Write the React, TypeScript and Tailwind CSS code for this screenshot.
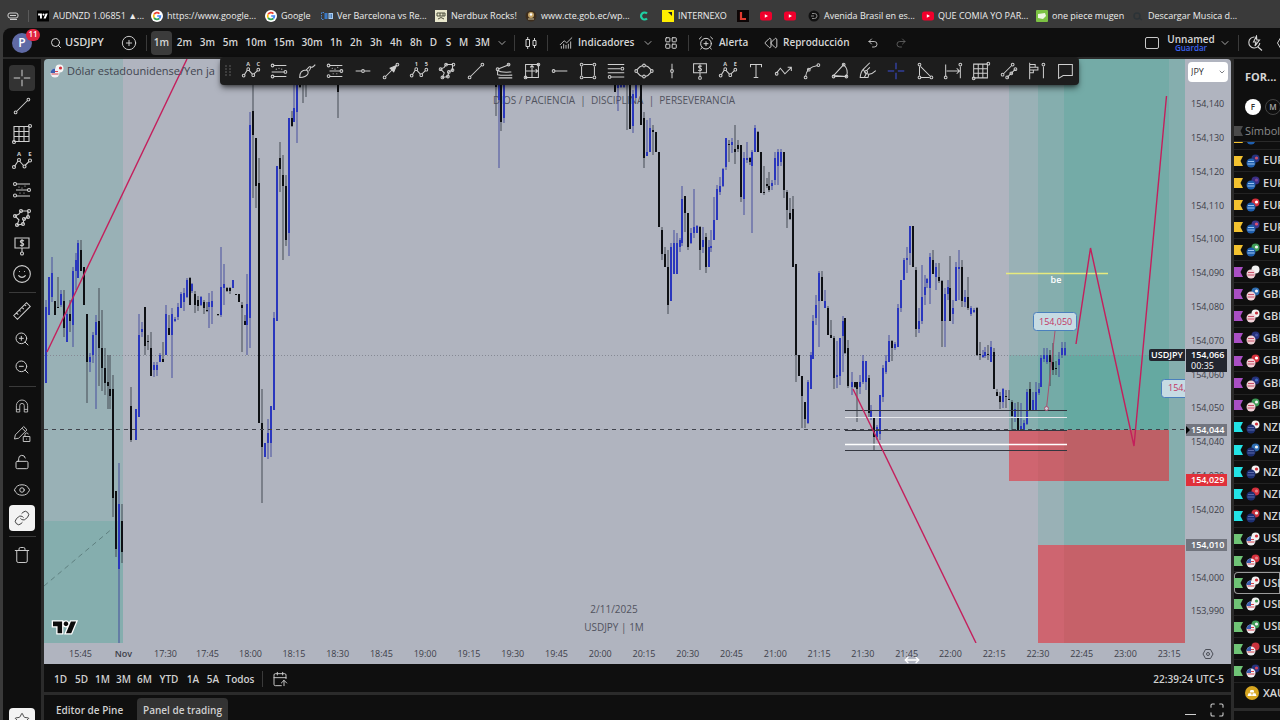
import type { ReactNode } from "react";
import {
  AlarmClockPlus,
  CalendarArrowUp,
  ChartNoAxesCombined,
  ChevronDown,
  CirclePlus,
  Eye,
  LayoutGrid,
  Link,
  LockOpen,
  Maximize,
  MoveHorizontal,
  Redo2,
  Rewind,
  Search,
  Smile,
  Star,
  Trash,
  Undo2,
  ZoomIn,
  ZoomOut,
} from "lucide-react";

// ── Types ──────────────────────────────────────────────────────────────────
type Side = "b" | "k";
// x, high, low, body top, body bottom, side
type Candle = [number, number, number, number, number, Side];

interface ToolIcon {
  d?: string;
  nodes?: [number, number][];
  dots?: [number, number][];
  labels?: [number, number, string][];
  arrow?: string;
}

// ── Candles ────────────────────────────────────────────────────────────────
const CANDLES: Candle[] = [
  [46, 300, 383, 307, 383, "b"], [49, 277, 315, 277, 315, "b"], [52, 257, 302, 273, 297, "b"],
  [55, 301, 315, 301, 315, "k"], [58, 277, 308, 307, 308, "k"], [61, 290, 307, 294, 305, "b"],
  [64, 290, 337, 301, 328, "k"], [67, 310, 342, 314, 342, "b"], [70, 300, 332, 314, 321, "k"],
  [73, 267, 347, 271, 325, "b"], [76, 253, 290, 260, 271, "b"], [78, 240, 278, 243, 278, "b"],
  [81, 240, 271, 250, 271, "k"], [84, 267, 305, 267, 305, "k"], [87, 314, 403, 314, 362, "k"],
  [90, 353, 372, 357, 362, "b"], [93, 332, 363, 335, 355, "b"], [96, 315, 409, 322, 335, "b"],
  [99, 288, 386, 321, 348, "k"], [102, 310, 391, 348, 368, "k"], [105, 348, 395, 368, 383, "k"],
  [108, 355, 409, 382, 386, "k"], [110, 355, 409, 389, 396, "k"], [113, 375, 517, 389, 498, "k"],
  [116, 491, 557, 491, 549, "k"], [119, 463, 643, 504, 569, "b"], [122, 504, 563, 521, 552, "k"],
  [131, 387, 442, 406, 440, "k"], [136, 409, 440, 409, 440, "b"], [139, 314, 417, 335, 417, "b"],
  [142, 322, 337, 329, 332, "b"], [145, 307, 355, 307, 346, "k"], [148, 335, 350, 341, 342, "k"],
  [151, 332, 376, 348, 376, "k"], [154, 362, 377, 365, 370, "b"], [157, 362, 376, 365, 370, "b"],
  [160, 353, 362, 355, 362, "b"], [163, 342, 362, 359, 362, "k"], [166, 305, 355, 314, 355, "b"],
  [169, 315, 335, 328, 335, "k"], [172, 308, 378, 314, 335, "b"], [175, 317, 322, 319, 321, "b"],
  [178, 303, 320, 307, 317, "b"], [181, 292, 308, 294, 308, "b"], [184, 288, 311, 293, 302, "b"],
  [187, 278, 298, 280, 297, "b"], [190, 277, 305, 278, 305, "k"], [192, 283, 293, 284, 291, "b"],
  [195, 291, 313, 294, 305, "k"], [198, 296, 311, 300, 306, "k"], [201, 296, 306, 297, 305, "b"],
  [204, 300, 314, 302, 308, "k"], [207, 302, 312, 310, 311, "k"], [209, 293, 328, 302, 307, "b"],
  [212, 291, 324, 301, 307, "b"], [218, 314, 316, 314, 315, "k"], [221, 247, 317, 287, 315, "b"],
  [224, 264, 305, 284, 288, "b"], [227, 287, 292, 288, 291, "k"], [230, 287, 294, 288, 291, "k"],
  [233, 280, 288, 280, 288, "b"], [236, 294, 295, 294, 295, "k"], [239, 294, 302, 294, 302, "k"],
  [242, 302, 352, 305, 308, "k"], [245, 315, 325, 321, 325, "k"], [247, 274, 355, 304, 325, "b"],
  [250, 112, 348, 125, 318, "b"], [253, 80, 198, 111, 135, "k"], [256, 138, 208, 138, 186, "k"],
  [259, 158, 423, 183, 423, "k"], [262, 389, 503, 423, 447, "k"], [265, 443, 457, 443, 457, "b"],
  [268, 419, 459, 433, 443, "b"], [271, 406, 457, 406, 443, "b"], [274, 312, 410, 318, 410, "b"],
  [277, 166, 321, 166, 321, "b"], [280, 142, 192, 158, 169, "k"], [283, 155, 260, 175, 186, "k"],
  [286, 175, 246, 186, 240, "k"], [289, 118, 256, 118, 233, "b"], [292, 111, 127, 118, 126, "k"],
  [294, 80, 122, 108, 122, "b"], [297, 80, 143, 80, 112, "b"], [300, 80, 88, 80, 87, "k"],
  [303, 80, 103, 80, 84, "k"], [306, 80, 97, 80, 84, "k"], [338, 80, 118, 80, 92, "k"],
  [496, 80, 116, 80, 87, "k"], [499, 80, 168, 80, 100, "b"], [501, 80, 131, 80, 122, "k"],
  [504, 80, 123, 80, 118, "b"], [615, 80, 92, 80, 92, "k"], [618, 80, 111, 80, 88, "b"],
  [621, 80, 88, 80, 87, "b"], [624, 80, 88, 80, 87, "b"], [627, 80, 130, 80, 84, "k"],
  [630, 80, 129, 80, 129, "k"], [633, 90, 133, 94, 126, "b"], [636, 80, 98, 80, 98, "b"],
  [641, 80, 125, 80, 125, "k"], [644, 112, 168, 118, 158, "k"], [647, 120, 156, 152, 156, "b"],
  [650, 118, 152, 128, 152, "b"], [653, 125, 155, 130, 132, "k"], [656, 132, 152, 132, 152, "k"],
  [659, 152, 227, 152, 227, "k"], [662, 227, 260, 230, 254, "k"], [665, 247, 267, 254, 267, "k"],
  [668, 250, 314, 267, 305, "k"], [671, 243, 301, 247, 301, "b"], [674, 230, 274, 243, 274, "b"],
  [677, 233, 274, 243, 274, "b"], [680, 238, 252, 240, 247, "b"], [682, 186, 246, 199, 243, "b"],
  [685, 196, 232, 196, 213, "k"], [688, 213, 250, 213, 247, "k"], [691, 228, 244, 233, 243, "b"],
  [694, 189, 238, 227, 233, "b"], [697, 225, 233, 226, 233, "b"], [700, 226, 270, 227, 250, "k"],
  [703, 227, 253, 240, 247, "b"], [706, 233, 273, 237, 267, "k"], [709, 240, 267, 247, 267, "b"],
  [711, 230, 252, 246, 248, "b"], [714, 197, 240, 220, 240, "b"], [717, 185, 220, 189, 220, "b"],
  [720, 177, 195, 186, 192, "b"], [723, 168, 187, 169, 186, "b"], [726, 138, 170, 138, 167, "b"],
  [729, 140, 162, 144, 145, "k"], [732, 138, 153, 142, 145, "b"], [735, 125, 164, 149, 152, "k"],
  [738, 140, 152, 145, 149, "k"], [741, 145, 202, 145, 197, "k"], [744, 152, 215, 158, 199, "b"],
  [747, 142, 163, 158, 160, "b"], [750, 157, 165, 158, 162, "k"], [752, 150, 233, 152, 166, "b"],
  [755, 125, 152, 128, 152, "b"], [758, 131, 152, 132, 152, "k"], [761, 152, 193, 152, 193, "k"],
  [764, 166, 195, 192, 193, "k"], [767, 178, 188, 184, 186, "k"], [769, 172, 192, 186, 190, "k"],
  [772, 180, 190, 183, 186, "b"], [775, 152, 185, 158, 180, "b"], [778, 149, 185, 152, 166, "b"],
  [781, 149, 166, 152, 162, "b"], [784, 152, 198, 152, 190, "k"], [787, 190, 228, 192, 210, "k"],
  [790, 198, 220, 213, 219, "k"], [793, 196, 267, 209, 267, "k"], [796, 264, 382, 264, 355, "k"],
  [799, 355, 376, 355, 376, "k"], [802, 376, 428, 376, 396, "k"], [805, 402, 428, 402, 419, "k"],
  [808, 380, 424, 382, 423, "b"], [811, 352, 389, 355, 389, "b"], [813, 315, 359, 321, 359, "b"],
  [816, 295, 325, 305, 318, "b"], [819, 271, 347, 273, 301, "b"], [822, 271, 301, 277, 301, "k"],
  [825, 290, 308, 301, 308, "b"], [828, 306, 335, 308, 335, "k"], [831, 320, 338, 335, 338, "k"],
  [834, 336, 389, 338, 378, "k"], [837, 341, 388, 375, 377, "b"], [840, 338, 385, 338, 376, "b"],
  [843, 316, 372, 321, 336, "b"], [845, 318, 354, 318, 353, "k"], [848, 340, 388, 348, 386, "k"],
  [852, 372, 395, 382, 387, "b"], [855, 382, 388, 382, 387, "k"], [857, 382, 422, 382, 389, "k"],
  [860, 375, 394, 382, 387, "b"], [863, 355, 384, 361, 382, "b"], [866, 361, 390, 361, 382, "b"],
  [869, 375, 417, 378, 413, "k"], [871, 405, 420, 410, 417, "b"], [874, 417, 450, 417, 437, "k"],
  [877, 425, 440, 427, 437, "b"], [880, 395, 440, 395, 434, "b"], [883, 365, 402, 368, 397, "b"],
  [886, 355, 374, 361, 372, "b"], [889, 335, 362, 341, 362, "b"], [892, 340, 361, 341, 348, "k"],
  [895, 342, 350, 344, 348, "b"], [898, 304, 347, 308, 347, "b"], [901, 280, 312, 280, 308, "b"],
  [904, 258, 280, 260, 280, "b"], [907, 247, 273, 258, 260, "b"], [910, 226, 265, 226, 253, "b"],
  [913, 226, 267, 226, 267, "k"], [916, 267, 337, 270, 329, "k"], [919, 308, 333, 321, 329, "b"],
  [922, 265, 324, 297, 321, "b"], [925, 275, 305, 287, 295, "b"], [927, 278, 288, 279, 283, "b"],
  [930, 253, 304, 257, 288, "b"], [933, 250, 274, 260, 274, "k"], [936, 263, 290, 267, 277, "b"],
  [939, 263, 283, 277, 281, "k"], [942, 280, 347, 281, 321, "k"], [945, 288, 347, 294, 321, "b"],
  [948, 280, 300, 287, 294, "b"], [950, 256, 321, 288, 321, "k"], [953, 300, 324, 308, 314, "b"],
  [956, 262, 301, 267, 301, "b"], [959, 250, 300, 267, 269, "b"], [962, 260, 307, 267, 301, "k"],
  [965, 290, 307, 297, 302, "b"], [968, 277, 310, 297, 308, "k"], [971, 306, 316, 308, 314, "b"],
  [974, 308, 313, 310, 312, "b"], [977, 307, 356, 308, 355, "k"], [980, 342, 360, 354, 355, "k"],
  [983, 350, 358, 355, 357, "b"], [985, 347, 358, 352, 356, "b"], [988, 345, 360, 354, 355, "k"],
  [991, 341, 362, 347, 362, "b"], [994, 348, 389, 352, 389, "k"], [997, 389, 396, 392, 396, "k"],
  [1000, 392, 409, 396, 402, "k"], [1003, 388, 408, 389, 402, "b"], [1006, 390, 408, 396, 397, "k"],
  [1009, 390, 400, 399, 400, "k"], [1012, 400, 430, 402, 416, "k"], [1015, 403, 422, 409, 417, "b"],
  [1018, 402, 430, 417, 430, "k"], [1021, 403, 430, 426, 430, "b"], [1024, 420, 430, 423, 430, "b"],
  [1027, 389, 425, 392, 424, "b"], [1030, 382, 410, 389, 410, "k"], [1033, 392, 410, 400, 410, "b"],
  [1036, 382, 410, 392, 410, "b"], [1039, 383, 395, 389, 393, "b"], [1041, 355, 387, 358, 387, "b"],
  [1044, 348, 362, 355, 359, "b"], [1047, 348, 364, 355, 362, "b"], [1050, 350, 386, 355, 362, "k"],
  [1053, 343, 375, 362, 370, "k"], [1056, 361, 375, 368, 369, "k"], [1059, 352, 377, 359, 365, "b"],
  [1062, 342, 358, 348, 355, "b"], [1065, 342, 356, 348, 355, "b"],
];

// ── Drawing tool icons (24 × 24) ───────────────────────────────────────────
const GRID: ToolIcon = {
  d: "M4 4.5H19V19.5H4ZM9 4.5V19.5M14 4.5V19.5M4 9.5H19M4 14.5H19",
  nodes: [[20, 4], [4, 20]],
};
const ZIGZAG = "M4.5 16.5L8 11M9.5 11L13.5 15.5M15 15.5L19 11.5";
const ZIGZAG_NODES: [number, number][] = [[4, 17], [9, 10], [14.5, 16.5], [20, 10.5]];
const POLY: ToolIcon = {
  d: "M5 10L9 8L11 5H18V11L14 13L13 18L7 19L9 14Z",
  nodes: [[5, 10], [11, 5], [19, 5], [18, 11], [14, 13], [13, 18], [7, 19]],
};
const NOTE: ToolIcon = {
  d: "M5 4H19V14H5ZM12 14V18M14 7Q12 5.800 10.500 7Q10 8.500 12 9Q14.200 9.600 13.500 11Q12 12.300 10 11M12 5V13",
  nodes: [[12, 19.5]],
};
const FIB_A: ToolIcon = {
  d: "M6 6H20M4 13H18M6 18H20",
  nodes: [[5, 6], [5, 18], [19, 13]],
  dots: [[9, 10], [12, 9], [15, 10]],
};
const FIB_B: ToolIcon = {
  d: "M6 6H20M6 12H18M6 18H20",
  nodes: [[5, 6], [5, 17.500], [19, 12]],
  dots: [[9, 9], [12, 10], [15, 8], [10, 15], [14, 15]],
};
const SEGMENT: ToolIcon = { d: "M6 18L18 6", nodes: [[5, 19], [19, 5]] };
const CROSS: ToolIcon = { d: "M12 3V10M12 14V21M3 12H10M14 12H21" };
const ELLIOTT: ToolIcon = { d: ZIGZAG, nodes: ZIGZAG_NODES, labels: [[9, 6, "A"], [20, 6, "E"]] };
const MAGNET: ToolIcon = {
  d: "M4.500 20V11.500A7.500 7.500 0 0 1 19.500 11.500V20H15V11.500A3 3 0 0 0 9 11.500V20ZM4.500 16.500H9M15 16.500H19.500",
};
const PENCIL_LOCK: ToolIcon = {
  d: "M3 18L4 13L14 3L18 7L8 17ZM12 5L16 9M13.500 15H21.500V21H13.500ZM15.500 15V13A2 2 0 0 1 19.500 12.500",
  dots: [[17.500, 18]],
};
const RULER: ToolIcon = {
  d: "M3 17L17 3L21 7L7 21ZM6 14L8 16M9 11L10.500 12.500M12 8L14 10M15 5L16.500 6.500",
};

const FLOATING: { name: string; icon: ToolIcon }[] = [
  { name: "Corrección ABC", icon: { d: ZIGZAG, nodes: ZIGZAG_NODES, labels: [[9, 6, "A"], [20, 6, "C"]] } },
  { name: "Extensión de Fibonacci", icon: FIB_A },
  { name: "Pincel", icon: { d: "M4 19Q4 11 11 11Q14 12 13 15Q11 19 4 19ZM11 11L15 7M14 12Q16 10 16 7.500Q18 9 21 5" } },
  { name: "Retroceso de Fibonacci", icon: FIB_B },
  { name: "Línea horizontal", icon: { d: "M4 12H10.500M13.500 12H20", nodes: [[12, 12]] } },
  { name: "Flecha", icon: { d: "M6 18L18 6", nodes: [[5, 19], [19, 5]], arrow: "M18 6L11 9L15 13Z" } },
  { name: "Impulso 12345", icon: { d: ZIGZAG, nodes: ZIGZAG_NODES, labels: [[9, 6, "1"], [20, 6, "5"]] } },
  { name: "Ruta cerrada", icon: POLY },
  { name: "Línea de tendencia", icon: SEGMENT },
  { name: "Abanico", icon: { d: "M5 10L18 5M5 11Q8 14 20 13M5 11V16Q9 17 21 16.500M6 19.500H21", nodes: [[5, 10], [17, 5]] } },
  { name: "Cuadro de Gann", icon: { d: "M5 5H19V19H5ZM12 5V19M5 12H19M10 8L12 6L14 8M16 10L18 12L16 14", nodes: [[19, 5], [5, 19]] } },
  { name: "Rayo horizontal", icon: { d: "M6 12H20", nodes: [[5, 12]] } },
  { name: "Rectángulo", icon: { d: "M5 7V17M19 7V17M7 5H17M7 19H17", nodes: [[5, 5], [19, 5], [5, 19], [19, 19]] } },
  { name: "Canal de regresión", icon: { d: "M3 5H21M3 9.500H17M3 14H21M6 18.500H21", nodes: [[19, 9.500], [5, 18.500]] } },
  { name: "Elipse", icon: { d: "M4.500 10.500Q7 7 10.500 6M13.500 6Q17 7 19.500 10.500M4.500 13.500Q7 17 10.500 18M13.500 18Q17 17 19.500 13.500", nodes: [[3.500, 12], [20.500, 12], [12, 6], [12, 18]] } },
  { name: "Línea vertical", icon: { d: "M12 4V10.500M12 13.500V20", nodes: [[12, 12]] } },
  { name: "Nota de precio", icon: NOTE },
  { name: "Triángulo ABCDE", icon: ELLIOTT },
  { name: "Texto", icon: { d: "M6 8V5H18V8M12 5V19M9.500 19H14.500" } },
  { name: "Ruta", icon: { d: "M4 14L8 9L13 15L20 8M16 8H20V12", nodes: [[4, 15]] } },
  { name: "Curva", icon: { d: "M5 18Q6 8 18 6", nodes: [[5, 19], [8.500, 10.500], [19, 5.500]] } },
  { name: "Sector", icon: { d: "M5 17L16 5Q22 11 19 18ZM5 18H18", nodes: [[5, 18], [16, 5], [19, 18]] } },
  { name: "Resaltador", icon: { d: "M7 10L14 3M7 10Q8 15 13 15.500Q17 15 20.500 11.500M7 10Q4 13 3.500 19H12L13 15.500M10 12L14 8M8 19L10 15", nodes: [[10, 13]] } },
  { name: "Cruz", icon: CROSS },
  { name: "Triángulo", icon: { d: "M6 7V17M7 19H17M7 7L18 18", nodes: [[6, 5], [6, 19], [19, 19]] } },
  { name: "Rango de fechas", icon: { d: "M4 5V18M20 7V20M5 12H19M16 9L19 12L16 15", nodes: [[20, 5], [4, 19]] } },
  { name: "Cuadrícula", icon: GRID },
  { name: "Canal paralelo", icon: { d: "M6 15L15 6M10 19L19 10", nodes: [[5, 16], [16, 5], [10, 19], [19, 10], [14.500, 14.500]] } },
  { name: "Perfil de volumen", icon: { d: "M4 3V21M4 5H10V8H4M4 8H13V11H4M4 11H8V14H4M19 7V20", nodes: [[19, 5]] } },
  { name: "Comentario", icon: { d: "M5 5H20V17H10L5 20Z" } },
];

// ── Header and footer data ─────────────────────────────────────────────────
const INTERVALS = [
  { label: "1m", w: "w-[23px]" },
  { label: "2m", w: "w-[23px]" },
  { label: "3m", w: "w-[23px]" },
  { label: "5m", w: "w-[23px]" },
  { label: "10m", w: "w-7" },
  { label: "15m", w: "w-7" },
  { label: "30m", w: "w-7" },
  { label: "1h", w: "w-5" },
  { label: "2h", w: "w-5" },
  { label: "3h", w: "w-5" },
  { label: "4h", w: "w-5" },
  { label: "8h", w: "w-5" },
  { label: "D", w: "w-[15px]" },
  { label: "S", w: "w-[15px]" },
  { label: "M", w: "w-[15px]" },
  { label: "3M", w: "w-[23px]" },
];

const RANGES = [
  { label: "1D", w: "w-[21px]" },
  { label: "5D", w: "w-[21px]" },
  { label: "1M", w: "w-[21px]" },
  { label: "3M", w: "w-[21px]" },
  { label: "6M", w: "w-[21px]" },
  { label: "YTD", w: "w-7" },
  { label: "1A", w: "w-5" },
  { label: "5A", w: "w-5" },
  { label: "Todos", w: "w-[34px]" },
];

const PRICES = [
  "154,140", "154,130", "154,120", "154,110", "154,100", "154,090", "154,080", "154,070",
  "154,060", "154,050", "154,040", "154,030", "154,020", "154,010", "154,000", "153,990",
];

const LATE_TIMES = [
  "18:15", "18:30", "18:45", "19:00", "19:15", "19:30", "19:45", "20:00", "20:15", "20:30", "20:45",
  "21:00", "21:15", "21:30", "21:45", "22:00", "22:15", "22:30", "22:45", "23:00", "23:15",
];

// base colour, accent and list flag per base currency
const BASES: Record<string, { base: string; accent: string; flag: string }> = {
  EUR: { base: "#1f5fae", accent: "#9cc4f0", flag: "#f3c22f" },
  GBP: { base: "#f0d3d8", accent: "#c9506a", flag: "#a94fc4" },
  NZD: { base: "#1d2f72", accent: "#5a68a8", flag: "#22e3e6" },
  USD: { base: "#f0f0f4", accent: "#d8434f", flag: "#6fc476" },
};
const PAIRS: [string, string, string][] = [
  ["EUR", "#26327c", "#c9506a"], ["EUR", "#3a2f86", "#7c4a96"], ["EUR", "#d5303c", "#ffffff"],
  ["EUR", "#3b3788", "#e05070"], ["EUR", "#3f9b57", "#f2f2f2"],
  ["GBP", "#f2f2f2", "#f2f2f2"], ["GBP", "#2f6fb4", "#f2f2f2"], ["GBP", "#f2f2f2", "#c8323e"],
  ["GBP", "#26327c", "#4656a6"], ["GBP", "#d5303c", "#ffffff"], ["GBP", "#26327c", "#3b6cc0"],
  ["GBP", "#3f9b57", "#f2f2f2"],
  ["NZD", "#f2f2f2", "#d5303c"], ["NZD", "#2f6fb4", "#f2f2f2"], ["NZD", "#f2f2f2", "#d5303c"],
  ["NZD", "#d5303c", "#e58088"], ["NZD", "#c8323e", "#f2f2f2"],
  ["USD", "#f2f2f2", "#d5303c"], ["USD", "#d5303c", "#e58088"], ["USD", "#f2f2f2", "#d5303c"],
  ["USD", "#f2f2f2", "#3f9b57"], ["USD", "#3f9b57", "#f2f2f2"], ["USD", "#c8323e", "#c8323e"],
  ["USD", "#26327c", "#d0435a"],
];

// ── Small pieces ───────────────────────────────────────────────────────────
function Tool({ icon, className = "size-6" }: { icon: ToolIcon; className?: string }) {
  return (
    <svg viewBox="0 0 24 24" className={`overflow-visible ${className}`} fill="none" stroke="currentColor" strokeWidth="1.1" aria-hidden="true">
      {icon.d && <path d={icon.d} />}
      {icon.nodes?.map(([x, y]) => <circle key={`${x}-${y}`} cx={x} cy={y} r="1.5" />)}
      {icon.dots?.map(([x, y]) => <circle key={`${x}-${y}`} cx={x} cy={y} r="0.6" fill="currentColor" stroke="none" />)}
      {icon.arrow && <path d={icon.arrow} fill="currentColor" />}
      {icon.labels?.map(([x, y, t]) => (
        <text key={`${x}-${t}`} x={x} y={y} fontSize="6" fontWeight="700" textAnchor="middle" fill="currentColor" stroke="none">
          {t}
        </text>
      ))}
    </svg>
  );
}

function Divider() {
  return <span className="h-4 w-px shrink-0 bg-[#3a3a3a]" />;
}

function GoogleMark() {
  return (
    <svg viewBox="0 0 12 12" className="size-3 shrink-0">
      <circle cx="6" cy="6" r="6" fill="#fff" />
      <g fill="none" strokeWidth="1.7">
        <path d="M8.400 3.600A3.400 3.400 0 0 0 3.100 4.300" stroke="#ea4335" />
        <path d="M3.100 4.300A3.400 3.400 0 0 0 3.100 7.700" stroke="#fbbc05" />
        <path d="M3.100 7.700A3.400 3.400 0 0 0 8.300 8.500" stroke="#34a853" />
        <path d="M8.300 8.500A3.400 3.400 0 0 0 9.400 6H6.200" stroke="#4285f4" />
      </g>
    </svg>
  );
}

function YoutubeMark() {
  return (
    <svg viewBox="0 0 12 12" className="size-3 shrink-0">
      <rect y="1.500" width="12" height="9" rx="2.500" fill="#f0002c" />
      <path d="M4.800 4.200L8 6L4.800 7.800Z" fill="#fff" />
    </svg>
  );
}

const TV_SHAPE = "M14 22H7V11H0V4H14ZM28 22H20L27.500 4H35.500ZM20 4A3.600 3.600 0 1 1 19.900 4Z";

const BOOKMARKS: { label?: string; w: string; icon: ReactNode }[] = [
  {
    label: "AUDNZD 1.06851 ▲...", w: "w-[114px]",
    icon: (
      <svg viewBox="-4 -7 44 40" className="size-3 shrink-0">
        <rect x="-4" y="-7" width="44" height="40" fill="#000" />
        <path d={TV_SHAPE} fill="#fff" />
      </svg>
    ),
  },
  { label: "https://www.google...", w: "w-[114px]", icon: <GoogleMark /> },
  { label: "Google", w: "w-[56px]", icon: <GoogleMark /> },
  {
    label: "Ver Barcelona vs Re...", w: "w-[114px]",
    icon: (
      <svg viewBox="0 0 12 12" className="size-3 shrink-0">
        <path d="M3 2.500H0.500V9.500H3" stroke="#4a86d0" strokeWidth="1" strokeDasharray="1.500 1" fill="none" />
        <rect x="3.500" y="3" width="3" height="6" fill="#3a78c4" />
        <rect x="7.500" y="3" width="4.500" height="6" fill="#a9cdf2" />
        <path d="M9 4V8M10.500 4V8" stroke="#2d5f9e" strokeWidth="0.7" />
      </svg>
    ),
  },
  {
    label: "Nerdbux Rocks!", w: "w-[90px]",
    icon: (
      <svg viewBox="0 0 12 12" className="size-3 shrink-0">
        <rect width="12" height="12" fill="#e9e8cd" />
        <path d="M2 3H10V6H2ZM3 9Q6 6 9 9M5 3V6M8 3V6" stroke="#4d4e3d" fill="none" />
      </svg>
    ),
  },
  {
    label: "www.cte.gob.ec/wp...", w: "w-[113px]",
    icon: (
      <svg viewBox="0 0 12 12" className="size-3 shrink-0">
        <circle cx="6" cy="6" r="5.500" fill="#3d2d1d" />
        <circle cx="6" cy="5" r="3" fill="#c5a466" />
        <path d="M3 9H9" stroke="#d8c9a0" />
        <circle cx="6" cy="4.500" r="1.200" fill="#fff" />
      </svg>
    ),
  },
  {
    w: "w-6",
    icon: (
      <svg viewBox="0 0 12 12" className="size-3 shrink-0">
        <path d="M9 3.500A3.500 3.500 0 1 0 9 8.500" stroke="#1fd0a3" strokeWidth="2.200" fill="none" />
      </svg>
    ),
  },
  {
    label: "INTERNEXO", w: "w-[75px]",
    icon: (
      <svg viewBox="0 0 12 12" className="size-3 shrink-0">
        <rect width="12" height="12" fill="#ffee00" />
        <path d="M6 2H10V6L8 4Z" fill="#222" />
      </svg>
    ),
  },
  {
    w: "w-[23px]",
    icon: (
      <svg viewBox="0 0 12 12" className="size-3 shrink-0">
        <rect width="12" height="12" fill="#0c0505" />
        <path d="M4 2V9H9" stroke="#e23b30" strokeWidth="2.200" fill="none" />
      </svg>
    ),
  },
  { w: "w-6", icon: <YoutubeMark /> },
  { w: "w-6", icon: <YoutubeMark /> },
  {
    label: "Avenida Brasil en es...", w: "w-[114px]",
    icon: (
      <svg viewBox="0 0 12 12" className="size-3 shrink-0">
        <circle cx="6" cy="6" r="5.500" fill="#111" />
        <path d="M4 3.500H6.500A2.500 2.500 0 0 1 6.500 8.500H4M3 6H6" stroke="#8a8a8a" fill="none" />
      </svg>
    ),
  },
  { label: "QUE COMIA YO PAR...", w: "w-[114px]", icon: <YoutubeMark /> },
  {
    label: "one piece mugen", w: "w-[96px]",
    icon: (
      <svg viewBox="0 0 12 12" className="size-3 shrink-0">
        <rect width="12" height="12" rx="1" fill="#7cc243" />
        <path d="M2 4L9 3L10 6L7 9L2 8Z" fill="#eef6e2" />
      </svg>
    ),
  },
  {
    label: "Descargar Musica d...", w: "w-[114px]",
    icon: (
      <svg viewBox="0 0 12 12" className="size-3 shrink-0">
        <circle cx="5" cy="6" r="3" stroke="#2c3337" strokeWidth="1.500" fill="none" />
        <path d="M7 8L10 10" stroke="#2c3337" strokeWidth="1.500" />
      </svg>
    ),
  },
];

// ── Browser bookmarks ──────────────────────────────────────────────────────
function BookmarksBar() {
  return (
    <nav aria-label="Marcadores" className="flex h-7 shrink-0 items-center overflow-hidden pt-1 pl-[7px] text-[9px] font-medium text-[#ececec]">
      <svg viewBox="0 0 12 12" className="size-3 shrink-0" fill="none" stroke="#d0d0d0">
        <rect x="1" y="3" width="10" height="5" rx="2" />
        <path d="M3 5.500H9M3 9.500H10" />
      </svg>
      <span className="mr-2 ml-[9px] h-3 w-px shrink-0 bg-[#5a5a5a]" />
      {BOOKMARKS.map((b, i) => (
        <a key={i} href="#" className={`flex shrink-0 items-center gap-1 whitespace-nowrap ${b.w}`} aria-label={b.label ?? "Marcador"}>
          {b.icon}
          {b.label && <span>{b.label}</span>}
        </a>
      ))}
    </nav>
  );
}

// ── Header ─────────────────────────────────────────────────────────────────
function Header() {
  return (
    <header className="flex h-[29px] shrink-0 items-center rounded-tl-lg bg-[#0f0f0f] text-[10px] font-semibold text-[#d6d6d6]">
      <div className="relative ml-[9px] flex size-5 shrink-0 items-center justify-center rounded-full bg-[#5f6aa5] text-xs text-white">
        P
        <span className="absolute -top-1 left-[14px] flex h-3 w-[14px] items-center justify-center rounded-full bg-[#e0243f] text-[8px]">11</span>
      </div>
      <button className="ml-[18px] flex w-[60px] shrink-0 items-center gap-[3px] text-[11px]">
        <Search className="size-3 shrink-0" strokeWidth={2} /> USDJPY
      </button>
      <button className="ml-[11px] shrink-0" aria-label="Comparar">
        <CirclePlus className="size-4" strokeWidth={1.4} />
      </button>
      <span className="w-[9px]" />
      <Divider />
      <div className="ml-[3px] flex shrink-0">
        {INTERVALS.map(({ label, w }) => (
          <div key={label} className={`flex justify-center ${w}`}>
            <button className={`h-6 rounded px-[3px] ${label === "1m" ? "bg-[#3b3b3b]" : ""}`}>{label}</button>
          </div>
        ))}
      </div>
      <button aria-label="Más intervalos" className="ml-[2px] shrink-0">
        <ChevronDown className="size-3" strokeWidth={1.5} />
      </button>
      <span className="w-[6px]" />
      <Divider />
      <button aria-label="Velas" className="mx-2 shrink-0">
        <svg viewBox="0 0 16 16" className="size-4" fill="none" stroke="currentColor">
          <path d="M3 4.500H6.500V11.500H3ZM4.700 2V4.500M4.700 11.500V14M10 5.500H13V10.500H10ZM11.500 3V5.500M11.500 10.500V13" />
        </svg>
      </button>
      <Divider />
      <button className="ml-[11px] flex w-[75px] shrink-0 items-center gap-[5px]">
        <ChartNoAxesCombined className="size-[14px] shrink-0" strokeWidth={1.5} /> Indicadores
      </button>
      <ChevronDown className="ml-2 size-3 shrink-0" strokeWidth={1.5} />
      <button aria-label="Plantillas" className="ml-[10px] shrink-0">
        <LayoutGrid className="size-[14px]" strokeWidth={1.7} />
      </button>
      <span className="w-[10px]" />
      <Divider />
      <button className="ml-[9px] flex w-[57px] shrink-0 items-center gap-[5px]">
        <AlarmClockPlus className="size-4 shrink-0" strokeWidth={1.5} /> Alerta
      </button>
      <button className="ml-[9px] flex w-[90px] shrink-0 items-center gap-[5px]">
        <Rewind className="size-[14px] shrink-0" strokeWidth={1.6} /> Reproducción
      </button>
      <button aria-label="Deshacer" className="ml-[13px] shrink-0">
        <Undo2 className="size-3" strokeWidth={1.7} />
      </button>
      <button aria-label="Rehacer" className="ml-4 shrink-0 text-[#666]">
        <Redo2 className="size-3" strokeWidth={1.7} />
      </button>
      <div className="flex-1" />
      <button aria-label="Diseño" className="mr-[10px] h-3 w-[14px] shrink-0 rounded-xs border border-[#c8c8c8]" />
      <button className="flex w-[44px] shrink-0 flex-col items-center leading-[10px]">
        <span>Unnamed</span>
        <span className="text-[8px] leading-[8px] text-[#3d63f0]">Guardar</span>
      </button>
      <ChevronDown className="ml-[6px] size-3 shrink-0" strokeWidth={1.5} />
      <span className="w-[7px]" />
      <Divider />
      <button aria-label="Búsqueda rápida" className="ml-2 shrink-0">
        <svg viewBox="0 0 16 16" className="size-4" fill="none" stroke="currentColor" strokeWidth="1.1">
          <path d="M7.500 2A5.500 5.500 0 1 0 12.800 8M11 12L15 15.500" />
          <path d="M9.500 1L6.500 7H9L8 11L12.500 5H9.800Z" />
        </svg>
      </button>
      <svg viewBox="0 0 3 14" className="ml-[14px] h-[14px] w-[3px] shrink-0" fill="none" stroke="currentColor">
        <path d="M4 1L0.500 7L4 13" />
      </svg>
    </header>
  );
}

// ── Left toolbar ───────────────────────────────────────────────────────────
function SideButton({ name, on, children }: { name: string; on?: string; children: ReactNode }) {
  return (
    <button aria-label={name} className="flex h-7 w-full shrink-0 items-center justify-center">
      <span className={`flex size-[26px] items-center justify-center rounded ${on ?? ""}`}>{children}</span>
    </button>
  );
}

function LeftToolbar() {
  return (
    <aside className="flex w-[38px] shrink-0 flex-col items-center overflow-hidden bg-[#0f0f0f] pt-[5px] text-[#cfcfcf]">
      <SideButton name="Cruz" on="bg-[#333]"><Tool icon={CROSS} className="size-[22px]" /></SideButton>
      <SideButton name="Línea de tendencia"><Tool icon={SEGMENT} className="size-[22px]" /></SideButton>
      <SideButton name="Cuadrícula"><Tool icon={GRID} /></SideButton>
      <SideButton name="Triángulo ABCDE"><Tool icon={ELLIOTT} /></SideButton>
      <SideButton name="Retroceso de Fibonacci"><Tool icon={FIB_B} /></SideButton>
      <SideButton name="Ruta cerrada"><Tool icon={POLY} /></SideButton>
      <SideButton name="Nota de precio"><Tool icon={NOTE} /></SideButton>
      <SideButton name="Iconos"><Smile className="size-5" strokeWidth={1.3} /></SideButton>
      <span className="my-1 h-px w-[27px] shrink-0 bg-[#3a3a3a]" />
      <SideButton name="Medir"><Tool icon={RULER} className="size-[22px]" /></SideButton>
      <SideButton name="Acercar"><ZoomIn className="size-4" strokeWidth={1.5} /></SideButton>
      <SideButton name="Alejar"><ZoomOut className="size-4" strokeWidth={1.5} /></SideButton>
      <span className="my-[5px] h-px w-[27px] shrink-0 bg-[#3a3a3a]" />
      <SideButton name="Imán"><Tool icon={MAGNET} className="size-[18px]" /></SideButton>
      <SideButton name="Modo dibujo"><Tool icon={PENCIL_LOCK} className="size-5" /></SideButton>
      <SideButton name="Bloquear"><LockOpen className="size-4" strokeWidth={1.5} /></SideButton>
      <SideButton name="Ocultar"><Eye className="size-[18px]" strokeWidth={1.3} /></SideButton>
      <SideButton name="Sincronizar" on="bg-[#f3f3f3] text-[#333]"><Link className="size-4" strokeWidth={1.4} /></SideButton>
      <span className="my-1 h-px w-[27px] shrink-0 bg-[#3a3a3a]" />
      <SideButton name="Eliminar"><Trash className="size-[18px]" strokeWidth={1.3} /></SideButton>
      <div className="flex-1" />
      <button aria-label="Favoritos" className="flex h-3 w-[26px] shrink-0 justify-center overflow-hidden rounded-t bg-[#f3f3f3] pt-1 text-[#333]">
        <Star className="size-4 shrink-0" strokeWidth={1.3} />
      </button>
    </aside>
  );
}

// ── Chart ──────────────────────────────────────────────────────────────────
function ChartCanvas() {
  return (
    <svg viewBox="44 59 1141 584" preserveAspectRatio="xMinYMin slice" className="absolute inset-0 size-full">
      {/* Session and position zones */}
      <g fill="#08a07d" fillOpacity="0.135">
        <rect x="44" y="59" width="79" height="584" />
        <rect x="44" y="521" width="79" height="122" />
        <rect x="1009" y="59" width="160" height="371" />
        <rect x="1009" y="355" width="160" height="75" />
        <rect x="1038" y="59" width="147" height="486" />
        <rect x="1064" y="59" width="121" height="486" />
      </g>
      <rect x="1009" y="430" width="160" height="51" fill="#cf6570" />
      <rect x="1038" y="430" width="131" height="51" fill="#c8626b" />
      <rect x="1064" y="430" width="105" height="51" fill="#be6066" />
      <rect x="1038" y="545" width="147" height="98" fill="#ce6570" />
      <rect x="1064" y="545" width="121" height="98" fill="#c66169" />

      {/* Watermark */}
      <g fill="#50535e" fontSize="10" textAnchor="middle">
        <text x="614" y="104">DIOS / PACIENCIA&nbsp; | &nbsp;DISCIPLINA&nbsp; | &nbsp;PERSEVERANCIA</text>
        <text x="614" y="613">2/11/2025</text>
        <text x="614" y="631">USDJPY | 1M</text>
      </g>

      <path d="M44 355.500H1185" stroke="#858994" strokeDasharray="1 2" />
      <path d="M44 586L113 528" stroke="#5f8080" strokeDasharray="5 4" fill="none" />

      {/* Candles */}
      {CANDLES.map(([x, high, low, top, bottom, side]) => (
        <g key={x}>
          <rect x={x - 0.5} y={high} width="1" height={low - high} fill={side === "b" ? "#3d429a" : "#3b3e47"} fillOpacity="0.9" />
          <rect x={x - 1} y={top} width="2" height={Math.max(bottom - top, 1)} fill={side === "b" ? "#2a37bd" : "#0e1014"} />
        </g>
      ))}

      {/* Levels */}
      <path d="M845 410.500H1067M845 430.500H1067M845 450.500H1067" stroke="#33363f" />
      <path d="M845 417.500H1067" stroke="#e4e6ea" />
      <path d="M845 444.500H1067" stroke="#fff" strokeWidth="1.600" />
      <path d="M44 429.500H1185" stroke="#3f424b" strokeDasharray="4 4" />
      <path d="M1006 273.500H1108" stroke="#e6ea7e" strokeWidth="1.500" />
      <text x="1056" y="283" fontSize="9" fontWeight="600" textAnchor="middle" fill="#fff">be</text>

      {/* Trend lines */}
      <g fill="none" stroke="#c41f5c" strokeWidth="1.400">
        <path d="M47 352L187 59" />
        <path d="M853 389L976 643" />
        <path d="M1076 344L1090.500 248L1134 446L1166.500 96" />
      </g>

      {/* Price notes */}
      <path d="M1055 331L1046.500 408" stroke="#a8506f" strokeWidth="1" />
      <circle cx="1046.500" cy="408.500" r="2" fill="#c9cfd8" stroke="#a8506f" />
      <g fill="#c6dbe3" stroke="#4a80bd">
        <rect x="1033.500" y="312.500" width="43" height="18" rx="3" />
        <rect x="1161.500" y="379.500" width="43" height="18" rx="3" />
      </g>
      <g fill="#c23663" fontSize="9">
        <text x="1039" y="325">154,050</text>
        <text x="1168" y="391">154,050</text>
      </g>

      {/* Logo */}
      <g transform="translate(53 619) scale(0.65)">
        <path d={TV_SHAPE} stroke="#fff" strokeWidth="4" fill="#fff" />
        <path d={TV_SHAPE} fill="#0c0c0c" />
      </g>
    </svg>
  );
}

function PriceAxis() {
  return (
    <div className="relative flex w-[46px] shrink-0 flex-col pt-7 pb-[15px] text-[9px] text-[#3d4049]">
      {PRICES.map((p) => (
        <div key={p} className="flex flex-1 items-center pl-[6px]">{p}</div>
      ))}
      <label className="absolute top-[3px] left-[3px] flex h-5 w-10 items-center rounded bg-white">
        <select aria-label="Moneda" className="w-full appearance-none pl-[3px] text-[9px] text-[#333]">
          <option>JPY</option>
        </select>
        <ChevronDown className="pointer-events-none absolute right-[2px] size-2" />
      </label>
      <div className="absolute top-[290px] -left-9 flex h-3 w-9 items-center justify-center rounded-l-xs bg-[#23262f] text-[9px] font-semibold text-white">USDJPY</div>
      <div className="absolute top-[290px] left-[1px] h-[23px] w-[41px] bg-[#23262f] pl-[5px] leading-[11px] text-white">
        <span className="block font-semibold">154,066</span>
        <span className="block">00:35</span>
      </div>
      <div className="absolute top-[365px] left-[1px] flex h-3 w-[41px] items-center bg-[#72757f] pl-[5px] font-semibold text-white">
        <span className="absolute left-0 border-y-4 border-l-4 border-y-transparent border-l-black" />
        154,044
      </div>
      <div className="absolute top-[415px] left-[1px] flex h-3 w-[41px] items-center bg-[#e0303a] pl-[5px] font-semibold text-white">154,029</div>
      <div className="absolute top-[480px] left-[1px] flex h-3 w-[41px] items-center bg-[#72757f] pl-[5px] font-semibold text-white">154,010</div>
    </div>
  );
}

function TimeAxis() {
  return (
    <div className="relative flex h-[21px] shrink-0 items-center pl-[15px] text-center text-[9px] text-[#3d4049]">
      <span className="w-[43px]">15:45</span>
      <span className="w-[43px] font-semibold">Nov</span>
      <span className="w-[41px]">17:30</span>
      <span className="w-[43px]">17:45</span>
      <span className="w-[43px]">18:00</span>
      {LATE_TIMES.map((t) => (
        <span key={t} className="flex-1">{t}</span>
      ))}
      <button aria-label="Ajustes del eje" className="flex w-10 justify-center pr-[6px]">
        <svg viewBox="0 0 12 12" className="size-3" fill="none" stroke="#4b4e57">
          <path d="M3.500 1.500H8.500L11 6L8.500 10.500H3.500L1 6Z" />
          <circle cx="6" cy="6" r="1.500" />
        </svg>
      </button>
      <MoveHorizontal className="absolute bottom-[-4px] left-[860px] size-4 text-white" strokeWidth={2} />
    </div>
  );
}

function PairIcon({ base, accent, quote, mark }: { base: string; accent: string; quote: string; mark: string }) {
  return (
    <svg viewBox="0 0 14 14" className="size-[14px] shrink-0">
      <circle cx="9.500" cy="4.500" r="4" fill={quote} />
      <circle cx="10.500" cy="4" r="1.600" fill={mark} />
      <circle cx="5" cy="9" r="4.500" fill={base} />
      <path d="M2 7.500H8M1.500 10H8.500" stroke={accent} strokeWidth="1" />
      {base === "#f0f0f4" && <path d="M0.500 9A4.500 4.500 0 0 1 5 4.500V9Z" fill="#3c5fb0" />}
    </svg>
  );
}

function Chart() {
  return (
    <section className="relative flex min-h-0 flex-1 flex-col overflow-hidden rounded-t bg-[#b0b4bf]">
      <div className="flex min-h-0 flex-1">
        <div className="relative flex-1 overflow-hidden">
          <ChartCanvas />
          <h1 className="absolute top-1 left-[6px] flex w-[170px] items-center gap-[3px] overflow-hidden text-[11px] whitespace-nowrap text-[#41454f]">
            <PairIcon base="#f0f0f4" accent="#d8434f" quote="#f5f5f5" mark="#d5303c" />
            Dólar estadounidense/Yen ja
          </h1>
        </div>
        <PriceAxis />
      </div>
      <TimeAxis />
    </section>
  );
}

function FloatingTools() {
  return (
    <div className="absolute -top-0.5 right-[152px] left-[176px] flex h-7 items-center rounded bg-[#1d1d1d] text-[#cfcfcf] shadow-md shadow-black/50">
      <svg viewBox="0 0 8 12" className="mr-[5px] ml-1 h-3 w-2 shrink-0" fill="#666">
        {[2, 6].map((x) => [1, 4, 7, 10].map((y) => <circle key={`${x}-${y}`} cx={x} cy={y} r="0.8" />))}
      </svg>
      {FLOATING.map(({ name, icon }) => (
        <button key={name} aria-label={name} className={`flex min-w-0 flex-1 justify-center ${name === "Cruz" ? "text-[#3d4fd8]" : ""}`}>
          <Tool icon={icon} className="size-[22px]" />
        </button>
      ))}
    </div>
  );
}

// ── Footer ─────────────────────────────────────────────────────────────────
function RangeBar() {
  return (
    <div className="flex h-7 shrink-0 items-center bg-[#0f0f0f] pt-0.5 pr-[7px] pl-[6px] text-[10px] font-semibold text-[#d0d0d0]">
      {RANGES.map(({ label, w }) => (
        <button key={label} className={`whitespace-nowrap ${w}`}>{label}</button>
      ))}
      <span className="w-[5px]" />
      <Divider />
      <button aria-label="Ir a fecha" className="ml-[9px]">
        <CalendarArrowUp className="size-4" strokeWidth={1.4} />
      </button>
      <button className="ml-auto">22:39:24 UTC-5</button>
    </div>
  );
}

function BottomTabs() {
  return (
    <div className="mt-[3px] flex h-[25px] shrink-0 items-end bg-[#0f0f0f] pr-[6px] text-[10px] font-semibold text-[#d0d0d0]">
      <button className="h-[22px] w-[93px] pt-[2px] pl-3 text-left">Editor de Pine</button>
      <button className="h-[22px] w-[91px] rounded-t bg-[#333] pt-[2px]">Panel de trading</button>
      <div className="flex-1" />
      <button aria-label="Minimizar" className="mr-[13px] mb-[5px] h-px w-[11px] bg-[#cfcfcf]" />
      <button aria-label="Maximizar"><Maximize className="mb-[2px] size-4" strokeWidth={1.6} /></button>
    </div>
  );
}

// ── Watchlist ──────────────────────────────────────────────────────────────
function FlagMark({ color }: { color: string }) {
  return (
    <svg viewBox="0 0 9 10" className="h-[10px] w-[9px] shrink-0">
      <path d="M0 0H9L6.500 5L9 10H0Z" fill={color} />
    </svg>
  );
}

function Watchlist() {
  return (
    <aside className="flex w-[46px] shrink-0 flex-col overflow-hidden bg-[#0f0f0f] text-[11px] font-semibold text-[#d6d6d6]">
      <h2 className="flex h-9 shrink-0 items-center gap-1 pl-[11px] font-bold whitespace-nowrap">
        FOR... <ChevronDown className="size-2 shrink-0" />
      </h2>
      <div className="flex h-6 shrink-0 items-center gap-1 pl-[11px] text-[8px]">
        <button className="size-4 shrink-0 rounded-full bg-white text-[#333]">F</button>
        <button className="size-4 shrink-0 rounded-full border border-[#444] text-[#aaa]">M</button>
      </div>
      <div className="flex h-[23px] shrink-0 items-center gap-[2px] border-b border-[#2a2a2a] pt-[2px] text-[11px] font-normal text-[#8a8a8a]">
        <FlagMark color="#4a4a4a" />
        <span>Símbolo</span>
      </div>
      <div className="flex h-2 shrink-0 items-end overflow-hidden border-b border-[#232323]">
        <div className="flex h-[22px] items-center gap-[3px]">
          <FlagMark color="#f3c22f" />
          <PairIcon base="#1f5fae" accent="#9cc4f0" quote="#26327c" mark="#c9506a" />
          <span>EUR</span>
        </div>
      </div>
      <div className="flex min-h-0 flex-1 flex-col">
        {PAIRS.map(([code, quote, mark], i) => (
          <div
            key={i}
            className={`flex flex-1 items-center gap-[3px] ${
              i === 19 ? "rounded-l ring-1 ring-[#9a9a9a] ring-inset" : "border-b border-[#232323]"
            }`}
          >
            <FlagMark color={BASES[code].flag} />
            <PairIcon base={BASES[code].base} accent={BASES[code].accent} quote={quote} mark={mark} />
            <span>{code}</span>
          </div>
        ))}
        <div className="flex flex-1 items-center gap-1 pl-[11px]">
          <svg viewBox="0 0 14 14" className="size-[14px] shrink-0">
            <circle cx="7" cy="7" r="7" fill="#d6a520" />
            <path d="M5.500 4H8.500L9.300 6.500H4.700ZM3.500 7.200H6.300L7 10H2.500ZM7.700 7.200H10.500L11.500 10H7Z" fill="#fff" />
          </svg>
          <span>XAU</span>
        </div>
      </div>
      <div className="mt-1 h-[3px] shrink-0 bg-[#2b2b2b]" />
      <div className="h-[9px] shrink-0" />
    </aside>
  );
}

// ── Page ───────────────────────────────────────────────────────────────────
export default function App() {
  return (
    <div className="flex h-screen flex-col overflow-hidden bg-[#3a3a3a] font-['Open_Sans','Noto_Sans',sans-serif]">
      <BookmarksBar />
      <div className="flex min-h-0 flex-1 flex-col pl-[3px]">
        <Header />
        <div className="flex min-h-0 flex-1 gap-[3px] bg-[#2b2b2b] pt-0.5">
          <LeftToolbar />
          <main className="relative flex min-w-0 flex-1 flex-col">
            <Chart />
            <RangeBar />
            <BottomTabs />
            <FloatingTools />
          </main>
          <Watchlist />
        </div>
      </div>
    </div>
  );
}
